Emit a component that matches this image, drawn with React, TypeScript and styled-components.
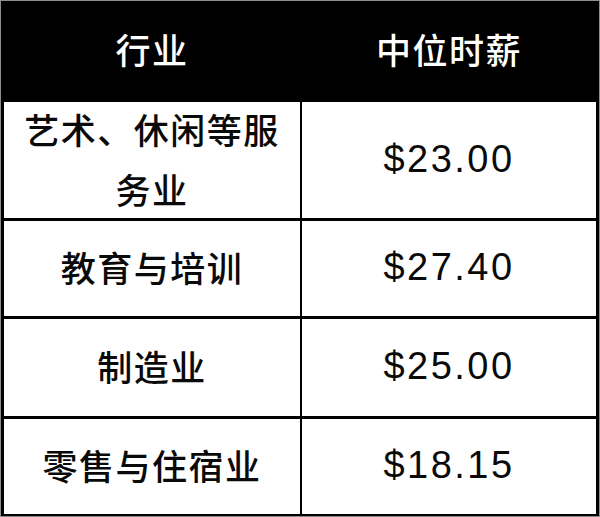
import { Fragment } from "react"
import styled, { createGlobalStyle } from "styled-components"

const Global = createGlobalStyle`
  html, body {
    margin: 0;
    padding: 0;
    background: #fff;
  }
`

const Frame = styled.div`
  width: 600px;
  height: 517px;
  box-sizing: border-box;
  border: 1px solid #8c8c8c;
  background: #fff;
`

const Table = styled.div`
  display: grid;
  grid-template-columns: 296px 294px;
  grid-template-rows: 98px 116px 95px 97px 95px;
  column-gap: 2px;
  row-gap: 3px;
  background: #000;
  border-left: 3px solid #000;
  border-right: 3px solid #000;
  border-bottom: 2px solid #000;
  width: fit-content;
`

type CellProps = {
  head?: boolean,
  money?: boolean
}

const Cell = styled.div<CellProps>`
  display: flex;
  align-items: center;
  justify-content: center;
  text-align: center;
  background: ${props => props.head ? '#000' : '#fff'};
  color: ${props => props.head ? '#fff' : '#0a0a0a'};
  font-family: ${props => props.money
    ? '"Liberation Sans", Arial, sans-serif'
    : '"Noto Sans CJK SC", "Liberation Sans", sans-serif'};
  font-size: ${props => props.money ? '38px' : '35px'};
  font-weight: ${props => props.money ? 400 : 500};
  letter-spacing: ${props => props.money ? '2.5px' : '1.5px'};
  line-height: 60px;
  padding: 0 16px 3px;
  box-sizing: border-box;
`

const rows = [
  { name: '艺术、休闲等服务业', pay: '$23.00' },
  { name: '教育与培训', pay: '$27.40' },
  { name: '制造业', pay: '$25.00' },
  { name: '零售与住宿业', pay: '$18.15' }
]

export default function App() {
  return (
    <>
      <Global />
      <Frame>
        <Table>
          <Cell head>行业</Cell>
          <Cell head>中位时薪</Cell>
          {rows.map(r => (
            <Fragment key={r.name}>
              <Cell>{r.name}</Cell>
              <Cell money>{r.pay}</Cell>
            </Fragment>
          ))}
        </Table>
      </Frame>
    </>
  )
}
